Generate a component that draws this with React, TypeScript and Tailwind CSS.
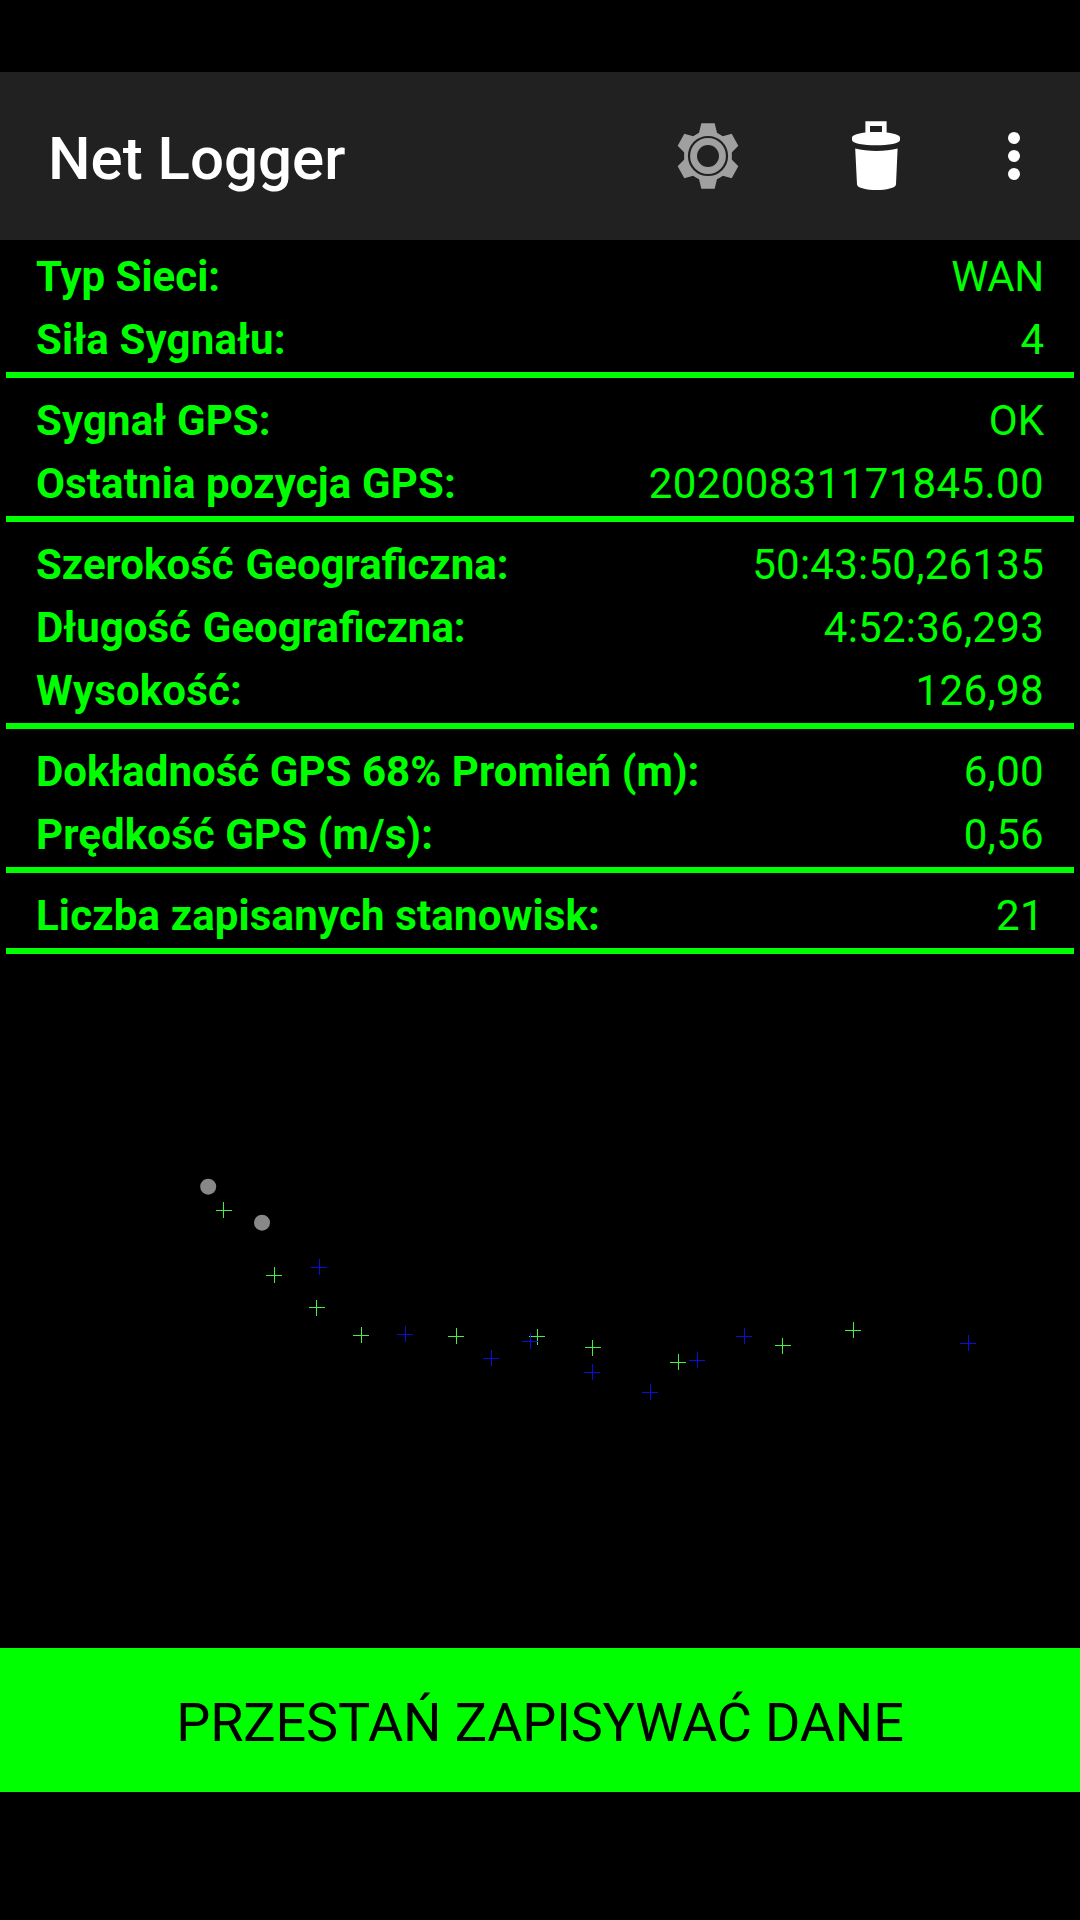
import { useState } from "react";

interface Reading {
  label: string;
  value: string;
  labelClass?: string;
  valueClass?: string;
}

const SECTIONS: Reading[][] = [
  [
    { label: "Typ Sieci:", value: "WAN", valueClass: "tracking-[-0.3px]" },
    { label: "Siła Sygnału:", value: "4", labelClass: "tracking-[0.15px]" },
  ],
  [
    { label: "Sygnał GPS:", value: "OK", labelClass: "tracking-[0.12px]" },
    {
      label: "Ostatnia pozycja GPS:",
      value: "20200831171845.00",
      labelClass: "tracking-[0.12px]",
      valueClass: "tracking-[0.38px]",
    },
  ],
  // word spacing instead of tracking here, tracking would break the "fi" ligature
  [
    {
      label: "Szerokość Geograficzna:",
      value: "50:43:50,26135",
      labelClass: "[word-spacing:1.5px]",
      valueClass: "tracking-[0.25px]",
    },
    {
      label: "Długość Geograficzna:",
      value: "4:52:36,293",
      labelClass: "[word-spacing:1.5px]",
      valueClass: "tracking-[0.25px]",
    },
    {
      label: "Wysokość:",
      value: "126,98",
      labelClass: "tracking-[0.15px]",
      valueClass: "tracking-[0.35px]",
    },
  ],
  [
    {
      label: "Dokładność GPS 68% Promień (m):",
      value: "6,00",
      labelClass: "[word-spacing:0.2px]",
      valueClass: "tracking-[0.3px]",
    },
    {
      label: "Prędkość GPS (m/s):",
      value: "0,56",
      labelClass: "tracking-[0.1px]",
      valueClass: "tracking-[0.3px]",
    },
  ],
  [
    {
      label: "Liczba zapisanych stanowisk:",
      value: "21",
      labelClass: "tracking-[0.15px]",
      valueClass: "tracking-[0.4px]",
    },
  ],
];

// Plot coordinates, origin at the top left of the track area
const GREEN_POINTS = [
  [223.6, 256], [274, 321], [316.6, 353.6], [361, 381], [456, 382], [537, 382.6],
  [592.6, 393.6], [678, 408], [782.6, 391.6], [853, 376],
];

const BLUE_POINTS = [
  [319, 313], [405, 380], [491, 404], [530, 387], [592, 418], [650, 438],
  [697, 406], [744, 382], [968, 389],
];

const GREY_POINTS = [
  [208.2, 232.7],
  [262, 268.7],
];

// Hairlines sit on whole pixels, the arms round to the nearest one
const crosses = (points: number[][]) =>
  points
    .map(([x, y]) => {
      const left = Math.round(x) - 8;
      const top = Math.round(y) - 8;
      return `M${left} ${Math.floor(y) + 0.5}h16M${Math.floor(x) + 0.5} ${top}v16`;
    })
    .join("");

function GearIcon() {
  return (
    <svg width="66" height="72" viewBox="-33 -36 66 72" className="block">
      <g fill="#a0a0a0" transform="scale(0.945 0.99)">
        <circle r="25.2" />
        {[0, 60, 120, 180, 240, 300].map((angle) => (
          <path key={angle} d="M-7 -33H7L9.5 -23.5L14 -20H-14L-9.5 -23.5Z" transform={`rotate(${angle})`} />
        ))}
      </g>
      <circle r="19" fill="none" stroke="#212121" strokeWidth="2.2" />
      <circle r="11" fill="#212121" />
    </svg>
  );
}

function TrashIcon() {
  return (
    <svg width="50" height="72" viewBox="851 120 50 72" className="block" fill="#fff">
      <path d="M867.7 135V123.6H884.3V135" fill="none" stroke="#fff" strokeWidth="4.6" />
      <path d="M852 137.5C852 130 900 130 900 137.5V140C900 147 852 147 852 140Z" />
      <path d="M855.2 148.5C867 151.8 886 151.8 897.6 148.5L896 184.5C895.5 191.8 857.5 191.8 857 184.5Z" />
    </svg>
  );
}

function MenuDots() {
  return (
    <svg width="12" height="48" viewBox="0 0 12 48" className="block" fill="#fff">
      <circle cx="6" cy="6" r="6" />
      <circle cx="6" cy="24" r="6" />
      <circle cx="6" cy="42" r="6" />
    </svg>
  );
}

export default function App() {
  const [logging, setLogging] = useState(true);

  return (
    <div className="flex h-[1920px] w-[1080px] flex-col overflow-hidden bg-black py-[72px] font-[Roboto,sans-serif]">
      <header className="flex h-[168px] shrink-0 items-center bg-[#212121] pr-[60px] pl-12 text-white">
        <h1 className="mt-1.5 flex-1 text-[60px] leading-[72px] font-medium">Net Logger</h1>
        <button className="mr-[110px]" aria-label="Ustawienia">
          <GearIcon />
        </button>
        <button className="mr-[107px]" aria-label="Usuń">
          <TrashIcon />
        </button>
        <button aria-label="Menu">
          <MenuDots />
        </button>
      </header>

      <main className="shrink-0 text-[42px] leading-[63px] text-[#00ff00]">
        {SECTIONS.map((rows) => (
          <section
            key={rows[0].label}
            className="mx-1.5 border-b-6 border-[#00ff00] px-[30px] pt-[11px] pb-px first:pt-[5px]"
          >
            {rows.map((row) => (
              <div key={row.label} className="flex justify-between">
                <span className={`font-bold ${row.labelClass ?? ""}`}>{row.label}</span>
                <span className={row.valueClass}>{row.value}</span>
              </div>
            ))}
          </section>
        ))}
      </main>

      <svg width="1080" height="694" viewBox="0 0 1080 694" className="block shrink-0">
        <path d={crosses(GREEN_POINTS)} stroke="#44f044" fill="none" />
        <path d={crosses(BLUE_POINTS)} stroke="#0c0cd8" fill="none" />
        {GREY_POINTS.map(([cx, cy]) => (
          <circle key={cx} cx={cx} cy={cy} r="8" fill="#888888" />
        ))}
      </svg>

      <button
        onClick={() => setLogging(!logging)}
        className="h-36 shrink-0 bg-[#00ff00] pt-1.5 text-[54px] leading-[64px] tracking-[-0.15px] text-black"
      >
        {logging ? "PRZESTAŃ ZAPISYWAĆ DANE" : "ZAPISUJ DANE"}
      </button>
    </div>
  );
}
